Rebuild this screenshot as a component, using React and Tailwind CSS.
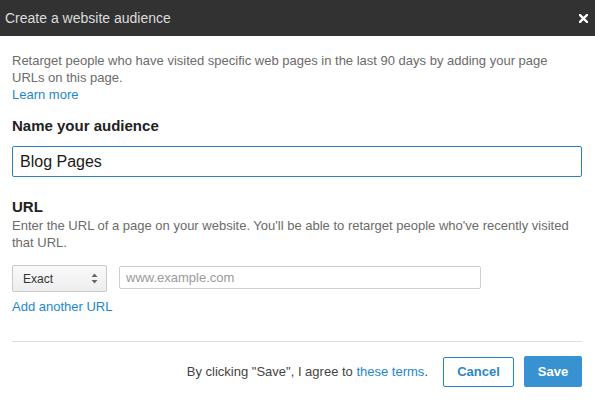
import { useState } from 'react';

export default function App() {
  const [name, setName] = useState('Blog Pages');
  const [url, setUrl] = useState('');

  return (
    <div className="w-[595px] h-[401px] bg-white overflow-hidden font-['Liberation_Sans',Arial,sans-serif]">
      <div className="h-[36px] bg-[#323232] flex items-center justify-between pl-[5px] pr-[6px]">
        <h2 className="text-[14px] text-[#dcdcdc]">Create a website audience</h2>
        <button className="w-[12px] h-[12px] flex items-center justify-center">
          <svg width="9" height="9" viewBox="0 0 9 9">
            <path d="M1 1L8 8M8 1L1 8" stroke="#ffffff" strokeWidth="2.4" strokeLinecap="square" />
          </svg>
        </button>
      </div>

      <div className="pl-[12px] pr-[13px] pt-[16px]">
        <p className="text-[13px] leading-[17px] text-[#6b6b6b]">
          Retarget people who have visited specific web pages in the last 90 days by adding your page URLs on this page.
        </p>
        <a className="block text-[13px] leading-[17px] text-[#1d87cf]">Learn more</a>

        <h3 className="mt-[13px] text-[15px] leading-[20px] font-bold text-[#222]">Name your audience</h3>
        <input
          value={name}
          onChange={e => setName(e.target.value)}
          className="mt-[10px] w-full h-[31px] border border-[#2c80c2] rounded-[2px] px-[7px] text-[16px] text-[#1a1a1a] outline-none"
        />

        <h3 className="mt-[20px] text-[15px] leading-[20px] font-bold text-[#222]">URL</h3>
        <p className="text-[13px] leading-[17px] text-[#6b6b6b]">
          Enter the URL of a page on your website. You'll be able to retarget people who've recently visited that URL.
        </p>

        <div className="mt-[14px] flex items-start gap-[12px]">
          <div className="w-[95px] h-[27px] border border-[#c9c9c9] rounded-[2px] bg-gradient-to-b from-[#fafafa] to-[#ededed] flex items-center justify-between pl-[10px] pr-[8px]">
            <span className="text-[12px] text-[#333]">Exact</span>
            <svg width="7" height="11" viewBox="0 0 7 11">
              <path d="M3.5 0.5L6.5 4H0.5Z" fill="#666" />
              <path d="M3.5 10.5L6.5 7H0.5Z" fill="#666" />
            </svg>
          </div>
          <input
            value={url}
            onChange={e => setUrl(e.target.value)}
            placeholder="www.example.com"
            className="mt-[1px] w-[362px] h-[23px] border border-[#cfcfcf] rounded-[2px] px-[6px] text-[13px] text-[#333] placeholder:text-[#9a9a9a] outline-none"
          />
        </div>
        <a className="block mt-[6px] text-[13px] leading-[17px] text-[#1d87cf]">Add another URL</a>

        <div className="mt-[26px] border-t border-[#dcdcdc]" />

        <div className="mt-[14px] flex items-center justify-end">
          <span className="text-[13px] text-[#444]">
            By clicking "Save", I agree to <a className="text-[#1d87cf]">these terms</a>.
          </span>
          <button className="ml-[15px] w-[71px] h-[30px] border border-[#2a86c9] rounded-[2px] text-[13px] font-bold text-[#2a86c9] bg-white">
            Cancel
          </button>
          <button className="ml-[10px] w-[58px] h-[31px] rounded-[2px] text-[13px] font-bold text-white bg-[#3892d1]">
            Save
          </button>
        </div>
      </div>
    </div>
  );
}
